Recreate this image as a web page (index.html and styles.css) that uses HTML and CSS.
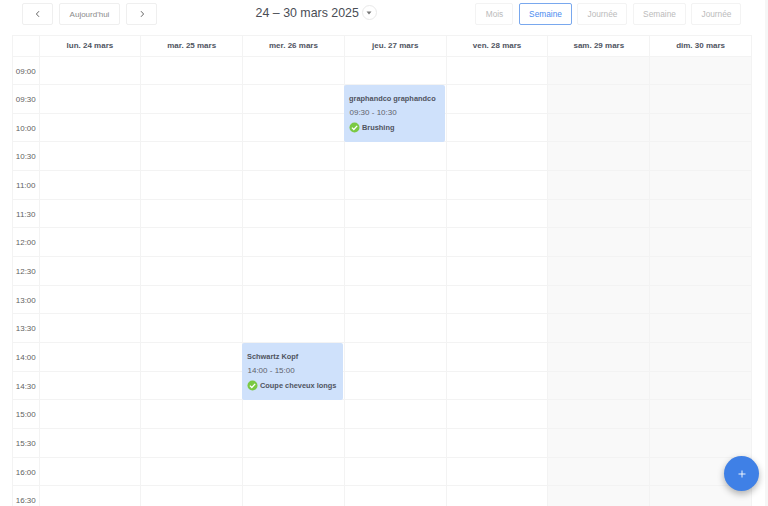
FILE: index.html
```html
<!DOCTYPE html>
<html lang="fr">
<head>
  <meta charset="UTF-8">
  <meta name="viewport" content="width=device-width, initial-scale=1.0">
  <title>Calendrier</title>
  <link rel="stylesheet" href="styles.css">
</head>
<body>
  <div class="page">
    <!-- Barre d'outils -->
    <div class="toolbar">
      <div class="nav-group">
        <button class="tool-btn nav-btn">
          <svg width="8" height="8" viewBox="0 0 8 8"><path d="M5 1.2 2.4 4 5 6.8" fill="none" stroke="#555" stroke-width="0.9"/></svg>
        </button>
        <button class="tool-btn today-btn">Aujourd'hui</button>
        <button class="tool-btn nav-btn">
          <svg width="8" height="8" viewBox="0 0 8 8"><path d="M3 1.2 5.6 4 3 6.8" fill="none" stroke="#555" stroke-width="0.9"/></svg>
        </button>
      </div>
      <div class="title-group">
        <span class="range-title">24 – 30 mars 2025</span>
        <span class="range-caret"><svg width="6" height="4" viewBox="0 0 6 4"><path d="M0.5 0.5h5L3 3.5z" fill="#777"/></svg></span>
      </div>
      <div class="view-group">
        <button class="tool-btn view-btn view-month">Mois</button>
        <button class="tool-btn view-btn view-week active">Semaine</button>
        <button class="tool-btn view-btn view-day">Journée</button>
        <button class="tool-btn view-btn view-week">Semaine</button>
        <button class="tool-btn view-btn view-day">Journée</button>
      </div>
    </div>

    <!-- Calendrier -->
    <div class="calendar">
      <div class="head-row">
        <div class="head-time"></div>
        <div class="head-day">lun. 24 mars</div>
        <div class="head-day">mar. 25 mars</div>
        <div class="head-day">mer. 26 mars</div>
        <div class="head-day">jeu. 27 mars</div>
        <div class="head-day">ven. 28 mars</div>
        <div class="head-day">sam. 29 mars</div>
        <div class="head-day">dim. 30 mars</div>
      </div>
      <div class="body-grid" id="grid">
        <div class="event event-jeu">
          <div class="event-name">graphandco graphandco</div>
          <div class="event-time">09:30 - 10:30</div>
          <div class="event-service">
            <svg width="11" height="11" viewBox="0 0 11 11"><circle cx="5.5" cy="5.5" r="5" fill="#7ac943"/><path d="M2.9 5.6 4.8 7.5 8.2 3.9" fill="none" stroke="#fff" stroke-width="1.3"/></svg>
            Brushing
          </div>
        </div>
        <div class="event event-mer">
          <div class="event-name">Schwartz Kopf</div>
          <div class="event-time">14:00 - 15:00</div>
          <div class="event-service">
            <svg width="11" height="11" viewBox="0 0 11 11"><circle cx="5.5" cy="5.5" r="5" fill="#7ac943"/><path d="M2.9 5.6 4.8 7.5 8.2 3.9" fill="none" stroke="#fff" stroke-width="1.3"/></svg>
            Coupe cheveux longs
          </div>
        </div>
      </div>
    </div>

    <button class="fab">
      <svg width="8" height="8" viewBox="0 0 8 8"><path d="M4 0.5v7M0.5 4h7" stroke="#fff" stroke-width="0.9"/></svg>
    </button>
    <div class="scroll-strip"></div>
  </div>

  <script>
    // Lignes de la grille
    const times = ['09:00','09:30','10:00','10:30','11:00','11:30','12:00','12:30','13:00','13:30','14:00','14:30','15:00','15:30','16:00','16:30'];
    const grid = document.getElementById('grid');
    times.forEach(function (t) {
      const label = document.createElement('div');
      label.className = 'time-cell';
      label.textContent = t;
      grid.appendChild(label);
      for (let d = 0; d < 7; d++) {
        const cell = document.createElement('div');
        cell.className = d > 4 ? 'slot weekend' : 'slot';
        grid.appendChild(cell);
      }
    });
  </script>
</body>
</html>
```

FILE: styles.css
```css
/* Général */
html, body {
  margin: 0;
  padding: 0;
  height: 100%;
  overflow: hidden;
  background: #fff;
}
body {
  font-family: "Liberation Sans", Arial, sans-serif;
  color: #3f4450;
}
.page {
  position: relative;
  height: 506px;
  overflow: hidden;
}
button {
  font-family: inherit;
  background: #fff;
  cursor: pointer;
}

/* Barre d'outils */
.toolbar {
  display: flex;
  justify-content: space-between;
  align-items: flex-start;
  padding: 3px 26.5px 0 22px;
  height: 35px;
  box-sizing: border-box;
}
.nav-group {
  display: flex;
  gap: 6px;
}
.view-group {
  display: flex;
  gap: 5.5px;
}
.tool-btn {
  height: 22px;
  padding: 0;
  border: 1px solid #efefef;
  border-radius: 2px;
  font-size: 8px;
  color: #9a9a9a;
}
.nav-btn {
  width: 31px;
  display: flex;
  align-items: center;
  justify-content: center;
}
.today-btn {
  width: 61px;
  color: #8b8b8b;
}
.title-group {
  display: flex;
  align-items: center;
  gap: 3px;
  height: 19px;
}
.range-title {
  font-size: 12.4px;
  color: #4a4d55;
}
.range-caret {
  width: 13px;
  height: 13px;
  border: 1px solid #e9e9e9;
  border-radius: 50%;
  display: flex;
  align-items: center;
  justify-content: center;
}
.view-btn {
  border-color: #f3f3f3;
  font-size: 8.3px;
  color: #bbb;
}
.view-month { width: 38px; }
.view-week { width: 53px; }
.view-day { width: 50px; }
.view-btn.active {
  color: #4a8cf0;
  border-color: #79a8ee;
}

/* Calendrier */
.calendar {
  margin-left: 12px;
  width: 740px;
  border-left: 1px solid #f3f3f3;
  border-top: 1px solid #f3f3f3;
  box-sizing: border-box;
}
.head-row,
.body-grid {
  display: grid;
  grid-template-columns: 26.5px repeat(7, 1fr);
}
.head-row {
  height: 20.5px;
}
.head-time,
.head-day {
  border-right: 1px solid #f3f3f3;
  border-bottom: 1px solid #f3f3f3;
}
.head-day {
  font-size: 8px;
  font-weight: bold;
  line-height: 19px;
  text-align: center;
  color: #50545f;
}
.body-grid {
  position: relative;
  grid-auto-rows: 28.67px;
}
.time-cell {
  border-right: 1px solid #f3f3f3;
  border-bottom: 1px solid #f3f3f3;
  font-size: 8px;
  line-height: 29px;
  text-align: center;
  color: #5f5f5f;
}
.slot {
  border-right: 1px solid #f3f3f3;
  border-bottom: 1px solid #f3f3f3;
}
.slot.weekend {
  background: #f9f9f9;
}

/* Rendez-vous */
.event {
  position: absolute;
  width: 101px;
  height: 57px;
  box-sizing: border-box;
  padding: 9px 5px 0;
  background: #cfe1fb;
  border-radius: 2px;
  font-size: 7.4px;
  white-space: nowrap;
  z-index: 2;
}
.event-jeu {
  left: 331px;
  top: 28px;
}
.event-mer {
  left: 229px;
  top: 286px;
}
.event-name {
  font-weight: bold;
  line-height: 10px;
  color: #50545f;
}
.event-time {
  margin-top: 4.5px;
  margin-left: 0.5px;
  font-size: 8px;
  line-height: 10px;
  color: #5f636c;
}
.event-service {
  display: flex;
  align-items: center;
  gap: 2px;
  margin-top: 4px;
  font-weight: bold;
  line-height: 11px;
  color: #50545f;
}

/* Bouton flottant */
.fab {
  position: absolute;
  left: 724px;
  top: 456px;
  width: 35px;
  height: 35px;
  padding: 0;
  border: none;
  border-radius: 50%;
  background: #3f80e6;
  box-shadow: 0 3px 7px rgba(0, 0, 0, 0.3);
  display: flex;
  align-items: center;
  justify-content: center;
  z-index: 3;
}
.scroll-strip {
  position: absolute;
  top: 0;
  right: 0;
  width: 3px;
  height: 100%;
  background: #f6f6f6;
}
```
